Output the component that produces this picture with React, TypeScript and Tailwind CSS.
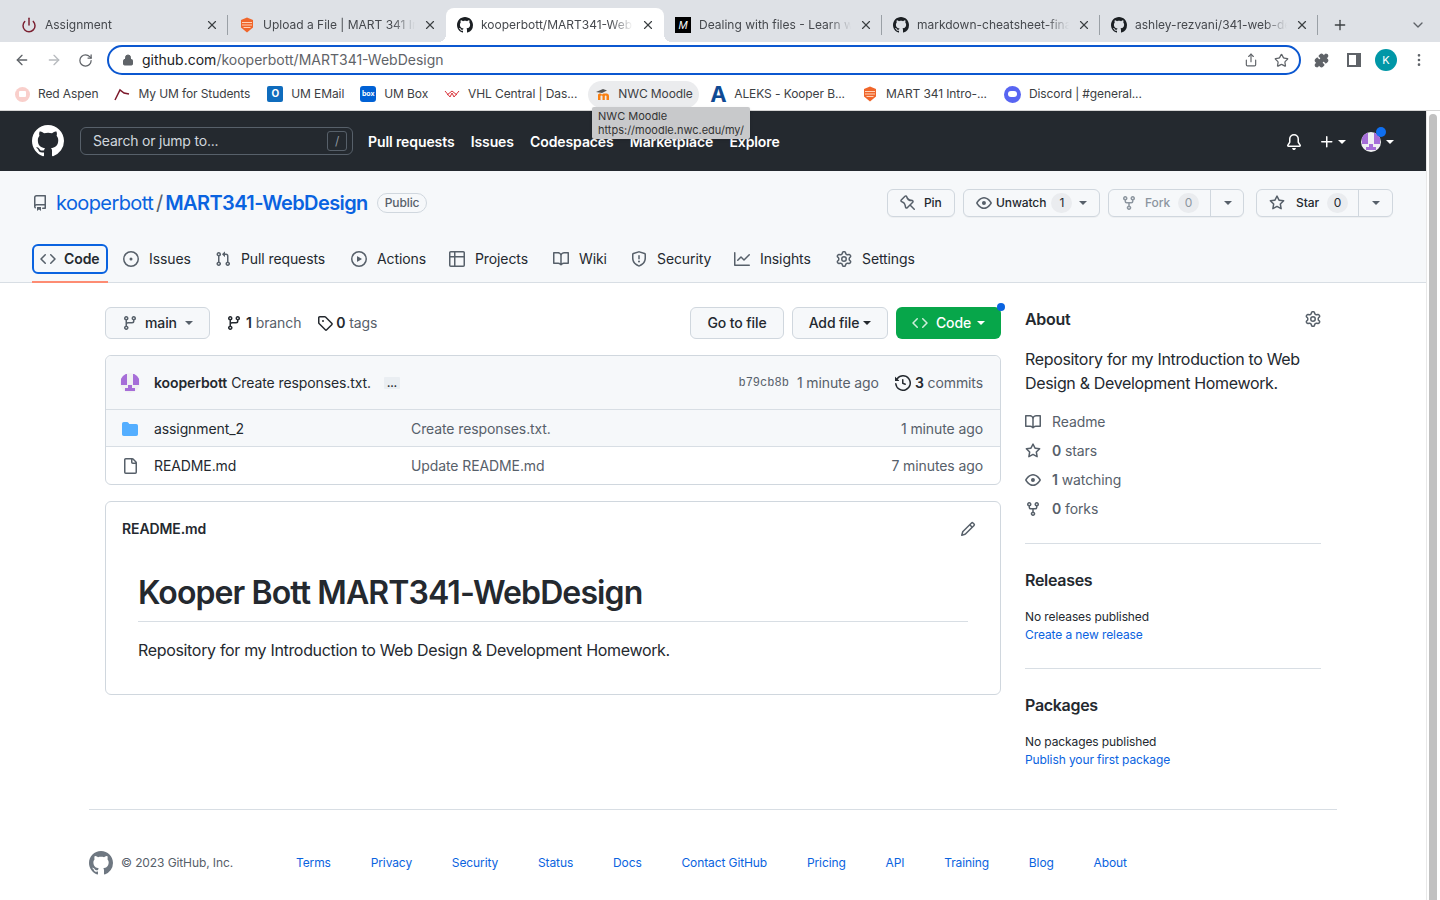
import { ArrowLeft, ArrowRight, Lock, MoreVertical, Plus, Power, Puzzle, RotateCw, Share, ChevronDown, Star, X } from 'lucide-react';

const octicons: Record<string, string> = {
  mark: "M8 0C3.58 0 0 3.58 0 8c0 3.54 2.29 6.53 5.47 7.59.4.07.55-.17.55-.38 0-.19-.01-.82-.01-1.49-2.01.37-2.53-.49-2.69-.94-.09-.23-.48-.94-.82-1.13-.28-.15-.68-.52-.01-.53.63-.01 1.08.58 1.23.82.72 1.21 1.87.87 2.33.66.07-.52.28-.87.51-1.07-1.78-.2-3.64-.89-3.64-3.95 0-.87.31-1.59.82-2.15-.08-.2-.36-1.02.08-2.12 0 0 .67-.21 2.2.82.64-.18 1.32-.27 2-.27.68 0 1.36.09 2 .27 1.53-1.04 2.2-.82 2.2-.82.44 1.1.16 1.92.08 2.12.51.56.82 1.27.82 2.15 0 3.07-1.87 3.75-3.65 3.95.29.25.54.73.54 1.48 0 1.07-.01 1.93-.01 2.2 0 .21.15.46.55.38A8.013 8.013 0 0016 8c0-4.42-3.58-8-8-8z",
  repo: "M2 2.5A2.5 2.5 0 0 1 4.5 0h8.75a.75.75 0 0 1 .75.75v12.5a.75.75 0 0 1-.75.75h-2.5a.75.75 0 0 1 0-1.5h1.75v-2h-8a1 1 0 0 0-.714 1.7.75.75 0 1 1-1.072 1.05A2.495 2.495 0 0 1 2 11.5Zm10.5-1h-8a1 1 0 0 0-1 1v6.708A2.486 2.486 0 0 1 4.5 9h8ZM5 12.25a.25.25 0 0 1 .25-.25h3.5a.25.25 0 0 1 .25.25v3.25a.25.25 0 0 1-.4.2l-1.45-1.087a.249.249 0 0 0-.3 0L5.4 15.7a.25.25 0 0 1-.4-.2Z",
  code: "m11.28 3.22 4.25 4.25a.75.75 0 0 1 0 1.06l-4.25 4.25a.749.749 0 0 1-1.275-.326.749.749 0 0 1 .215-.734L13.94 8l-3.72-3.72a.749.749 0 0 1 .326-1.275.749.749 0 0 1 .734.215Zm-6.56 0a.751.751 0 0 1 1.042.018.751.751 0 0 1 .018 1.042L2.06 8l3.72 3.72a.749.749 0 0 1-.326 1.275.749.749 0 0 1-.734-.215L.47 8.53a.75.75 0 0 1 0-1.06Z",
  issue: "M8 9.5a1.5 1.5 0 1 0 0-3 1.5 1.5 0 0 0 0 3ZM8 0a8 8 0 1 1 0 16A8 8 0 0 1 8 0ZM1.5 8a6.5 6.5 0 1 0 13 0 6.5 6.5 0 0 0-13 0Z",
  pull: "M1.5 3.25a2.25 2.25 0 1 1 3 2.122v5.256a2.251 2.251 0 1 1-1.5 0V5.372A2.25 2.25 0 0 1 1.5 3.25Zm5.677-.177L9.573.677A.25.25 0 0 1 10 .854V2.5h1A2.5 2.5 0 0 1 13.5 5v5.628a2.251 2.251 0 1 1-1.5 0V5a1 1 0 0 0-1-1h-1v1.646a.25.25 0 0 1-.427.177L7.177 3.427a.25.25 0 0 1 0-.354ZM3.75 2.5a.75.75 0 1 0 0 1.5.75.75 0 0 0 0-1.5Zm0 9.5a.75.75 0 1 0 0 1.5.75.75 0 0 0 0-1.5Zm8.25.75a.75.75 0 1 0 1.5 0 .75.75 0 0 0-1.5 0Z",
  play: "M8 0a8 8 0 1 1 0 16A8 8 0 0 1 8 0ZM1.5 8a6.5 6.5 0 1 0 13 0 6.5 6.5 0 0 0-13 0Zm4.879-2.773 4.264 2.559a.25.25 0 0 1 0 .428l-4.264 2.559A.25.25 0 0 1 6 10.559V5.442a.25.25 0 0 1 .379-.215Z",
  table: "M0 1.75C0 .784.784 0 1.75 0h12.5C15.216 0 16 .784 16 1.75v12.5A1.75 1.75 0 0 1 14.25 16H1.75A1.75 1.75 0 0 1 0 14.25ZM6.5 6.5v8h7.75a.25.25 0 0 0 .25-.25V6.5Zm8-1.5V1.75a.25.25 0 0 0-.25-.25H6.5V5Zm-13 1.5v7.75c0 .138.112.25.25.25H5v-8ZM5 5V1.5H1.75a.25.25 0 0 0-.25.25V5Z",
  book: "M0 1.75A.75.75 0 0 1 .75 1h4.253c1.227 0 2.317.59 3 1.501A3.743 3.743 0 0 1 11.006 1h4.245a.75.75 0 0 1 .75.75v10.5a.75.75 0 0 1-.75.75h-4.507a2.25 2.25 0 0 0-1.591.659l-.622.621a.75.75 0 0 1-1.06 0l-.622-.621A2.25 2.25 0 0 0 5.258 13H.75a.75.75 0 0 1-.75-.75Zm7.251 10.324.004-5.073-.002-2.253A2.25 2.25 0 0 0 5.003 2.5H1.5v9h3.757a3.75 3.75 0 0 1 1.994.574ZM8.755 4.75l-.004 7.322a3.752 3.752 0 0 1 1.992-.572H14.5v-9h-3.495a2.25 2.25 0 0 0-2.25 2.25Z",
  shield: "M7.467.133a1.748 1.748 0 0 1 1.066 0l5.25 1.68A1.75 1.75 0 0 1 15 3.48V7c0 1.566-.32 3.182-1.303 4.682-.983 1.498-2.585 2.813-5.032 3.855a1.697 1.697 0 0 1-1.33 0c-2.447-1.042-4.049-2.357-5.032-3.855C1.32 10.182 1 8.566 1 7V3.48a1.75 1.75 0 0 1 1.217-1.667Zm.61 1.429a.25.25 0 0 0-.153 0l-5.25 1.68a.25.25 0 0 0-.174.238V7c0 1.358.275 2.666 1.057 3.86.784 1.194 2.121 2.34 4.366 3.297a.196.196 0 0 0 .154 0c2.245-.956 3.582-2.104 4.366-3.298C13.225 9.666 13.5 8.36 13.5 7V3.48a.251.251 0 0 0-.174-.237l-5.25-1.68ZM8.75 4.75v3a.75.75 0 0 1-1.5 0v-3a.75.75 0 0 1 1.5 0ZM9 10.5a1 1 0 1 1-2 0 1 1 0 0 1 2 0Z",
  graph: "M1.5 1.75V13.5h13.75a.75.75 0 0 1 0 1.5H.75a.75.75 0 0 1-.75-.75V1.75a.75.75 0 0 1 1.5 0Zm14.28 2.53-5.25 5.25a.75.75 0 0 1-1.06 0L7 7.06 4.28 9.78a.751.751 0 0 1-1.042-.018.751.751 0 0 1-.018-1.042l3.25-3.25a.75.75 0 0 1 1.06 0L10 7.94l4.72-4.72a.751.751 0 0 1 1.042.018.751.751 0 0 1 .018 1.042Z",
  gear: "M8 0a8.2 8.2 0 0 1 .701.031C9.444.095 9.99.645 10.16 1.29l.288 1.107c.018.066.079.158.212.224.231.114.454.243.668.386.123.082.233.09.299.071l1.103-.303c.644-.176 1.392.021 1.82.63.27.385.506.792.704 1.218.315.675.111 1.422-.364 1.891l-.814.806c-.049.048-.098.147-.088.294.016.257.016.515 0 .772-.01.147.038.246.088.294l.814.806c.475.469.679 1.216.364 1.891a7.977 7.977 0 0 1-.704 1.217c-.428.61-1.176.807-1.82.63l-1.102-.302c-.067-.019-.177-.011-.3.071a5.909 5.909 0 0 1-.668.386c-.133.066-.194.158-.211.224l-.29 1.106c-.168.646-.715 1.196-1.458 1.26a8.006 8.006 0 0 1-1.402 0c-.743-.064-1.289-.614-1.458-1.26l-.289-1.106c-.018-.066-.079-.158-.212-.224a5.738 5.738 0 0 1-.668-.386c-.123-.082-.233-.09-.299-.071l-1.103.303c-.644.176-1.392-.021-1.82-.63a8.12 8.12 0 0 1-.704-1.218c-.315-.675-.111-1.422.363-1.891l.815-.806c.05-.048.098-.147.088-.294a6.214 6.214 0 0 1 0-.772c.01-.147-.038-.246-.088-.294l-.815-.806C.635 6.045.431 5.298.746 4.623a7.92 7.92 0 0 1 .704-1.217c.428-.61 1.176-.807 1.82-.63l1.102.302c.067.019.177.011.3-.071.214-.143.437-.272.668-.386.133-.066.194-.158.211-.224l.29-1.106C6.009.645 6.556.095 7.299.03 7.53.01 7.764 0 8 0Zm-.571 1.525c-.036.003-.108.036-.137.146l-.289 1.105c-.147.561-.549.967-.998 1.189-.173.086-.34.183-.5.29-.417.278-.97.423-1.529.27l-1.103-.303c-.109-.03-.175.016-.195.045-.22.312-.412.644-.573.99-.014.031-.021.11.059.19l.815.806c.411.406.562.957.53 1.456a4.709 4.709 0 0 0 0 .582c.032.499-.119 1.05-.53 1.456l-.815.806c-.081.08-.073.159-.059.19.162.346.353.677.573.989.02.03.085.076.195.046l1.102-.303c.56-.153 1.113-.008 1.53.27.161.107.328.204.501.29.447.222.85.629.997 1.189l.289 1.105c.029.109.101.143.137.146a6.6 6.6 0 0 0 1.142 0c.036-.003.108-.036.137-.146l.289-1.105c.147-.561.549-.967.998-1.189.173-.086.34-.183.5-.29.417-.278.97-.423 1.529-.27l1.103.303c.109.029.175-.016.195-.045.22-.313.411-.644.573-.99.014-.031.021-.11-.059-.19l-.815-.806c-.411-.406-.562-.957-.53-1.456a4.709 4.709 0 0 0 0-.582c-.032-.499.119-1.05.53-1.456l.815-.806c.081-.08.073-.159.059-.19a6.464 6.464 0 0 0-.573-.989c-.02-.03-.085-.076-.195-.046l-1.102.303c-.56.153-1.113.008-1.53-.27a4.44 4.44 0 0 0-.501-.29c-.447-.222-.85-.629-.997-1.189l-.289-1.105c-.029-.11-.101-.143-.137-.146a6.6 6.6 0 0 0-1.142 0ZM11 8a3 3 0 1 1-6 0 3 3 0 0 1 6 0ZM9.5 8a1.5 1.5 0 1 0-3.001.001A1.5 1.5 0 0 0 9.5 8Z",
  pin: "M4.456.734a1.75 1.75 0 012.826.504l.613 1.327a3.081 3.081 0 002.084 1.707l2.454.584c1.332.317 1.8 1.972.832 2.94L11.06 10l3.72 3.72a.75.75 0 11-1.061 1.06L10 11.06l-2.204 2.205c-.968.968-2.623.5-2.94-.832l-.584-2.454a3.081 3.081 0 00-1.707-2.084l-1.327-.613a1.75 1.75 0 01-.504-2.826L4.456.734zM5.92 1.866a.25.25 0 00-.404-.072L1.794 5.516a.25.25 0 00.072.404l1.328.613A4.582 4.582 0 015.73 9.63l.584 2.454a.25.25 0 00.42.12l5.47-5.47a.25.25 0 00-.12-.42L9.63 6.13a4.583 4.583 0 01-3.098-2.537L5.92 1.866z",
  eye: "M8 2c1.981 0 3.671.992 4.933 2.078 1.27 1.091 2.187 2.345 2.637 3.023a1.62 1.62 0 0 1 0 1.798c-.45.678-1.367 1.932-2.637 3.023C11.67 13.008 9.981 14 8 14c-1.981 0-3.671-.992-4.933-2.078C1.797 10.83.88 9.576.43 8.898a1.62 1.62 0 0 1 0-1.798c.45-.677 1.367-1.931 2.637-3.022C4.33 2.992 6.019 2 8 2ZM1.679 7.932a.12.12 0 0 0 0 .136c.411.622 1.241 1.75 2.366 2.717C5.176 11.758 6.527 12.5 8 12.5c1.473 0 2.825-.742 3.955-1.715 1.124-.967 1.954-2.096 2.366-2.717a.12.12 0 0 0 0-.136c-.412-.621-1.242-1.75-2.366-2.717C10.824 4.242 9.473 3.5 8 3.5c-1.473 0-2.825.742-3.955 1.715-1.124.967-1.954 2.096-2.366 2.717ZM8 10a2 2 0 1 1-.001-3.999A2 2 0 0 1 8 10Z",
  fork: "M5 5.372v.878c0 .414.336.75.75.75h4.5a.75.75 0 0 0 .75-.75v-.878a2.25 2.25 0 1 1 1.5 0v.878a2.25 2.25 0 0 1-2.25 2.25h-1.5v2.128a2.251 2.251 0 1 1-1.5 0V8.5h-1.5A2.25 2.25 0 0 1 3.5 6.25v-.878a2.25 2.25 0 1 1 1.5 0ZM5 3.25a.75.75 0 1 0-1.5 0 .75.75 0 0 0 1.5 0Zm6.75.75a.75.75 0 1 0 0-1.5.75.75 0 0 0 0 1.5Zm-3 8.75a.75.75 0 1 0-1.5 0 .75.75 0 0 0 1.5 0Z",
  star: "M8 .25a.75.75 0 0 1 .673.418l1.882 3.815 4.21.612a.75.75 0 0 1 .416 1.279l-3.046 2.97.719 4.192a.751.751 0 0 1-1.088.791L8 12.347l-3.766 1.98a.75.75 0 0 1-1.088-.79l.72-4.194L.818 6.374a.75.75 0 0 1 .416-1.28l4.21-.611L7.327.668A.75.75 0 0 1 8 .25Zm0 2.445L6.615 5.5a.75.75 0 0 1-.564.41l-3.097.45 2.24 2.184a.75.75 0 0 1 .216.664l-.528 3.084 2.769-1.456a.75.75 0 0 1 .698 0l2.77 1.456-.53-3.084a.75.75 0 0 1 .216-.664l2.24-2.183-3.096-.45a.75.75 0 0 1-.564-.41L8 2.694Z",
  branch: "M9.5 3.25a2.25 2.25 0 1 1 3 2.122V6A2.5 2.5 0 0 1 10 8.5H6a1 1 0 0 0-1 1v1.128a2.251 2.251 0 1 1-1.5 0V5.372a2.25 2.25 0 1 1 1.5 0v1.836A2.493 2.493 0 0 1 6 7h4a1 1 0 0 0 1-1v-.628A2.25 2.25 0 0 1 9.5 3.25Zm-6 0a.75.75 0 1 0 1.5 0 .75.75 0 0 0-1.5 0Zm8.25-.75a.75.75 0 1 0 0 1.5.75.75 0 0 0 0-1.5ZM4.25 12a.75.75 0 1 0 0 1.5.75.75 0 0 0 0-1.5Z",
  tag: "M1 7.775V2.75C1 1.784 1.784 1 2.75 1h5.025c.464 0 .91.184 1.238.513l6.25 6.25a1.75 1.75 0 0 1 0 2.474l-5.026 5.026a1.75 1.75 0 0 1-2.474 0l-6.25-6.25A1.752 1.752 0 0 1 1 7.775Zm1.5 0c0 .066.026.13.073.177l6.25 6.25a.25.25 0 0 0 .354 0l5.025-5.025a.25.25 0 0 0 0-.354l-6.25-6.25a.25.25 0 0 0-.177-.073H2.75a.25.25 0 0 0-.25.25ZM6 5a1 1 0 1 1 0 2 1 1 0 0 1 0-2Z",
  history: "m.427 1.927 1.215 1.215a8.002 8.002 0 1 1-1.6 5.685.75.75 0 1 1 1.493-.154 6.5 6.5 0 1 0 1.18-4.458l1.358 1.358A.25.25 0 0 1 3.896 6H.25A.25.25 0 0 1 0 5.75V2.104a.25.25 0 0 1 .427-.177ZM7.75 4a.75.75 0 0 1 .75.75v2.992l2.028.812a.75.75 0 0 1-.557 1.392l-2.5-1A.751.751 0 0 1 7 8.25v-3.5A.75.75 0 0 1 7.75 4Z",
  folder: "M1.75 1A1.75 1.75 0 0 0 0 2.75v10.5C0 14.216.784 15 1.75 15h12.5A1.75 1.75 0 0 0 16 13.25v-8.5A1.75 1.75 0 0 0 14.25 3H7.5a.25.25 0 0 1-.2-.1l-.9-1.2C6.07 1.26 5.55 1 5 1H1.75Z",
  file: "M2 1.75C2 .784 2.784 0 3.75 0h6.586c.464 0 .909.184 1.237.513l2.914 2.914c.329.328.513.773.513 1.237v9.586A1.75 1.75 0 0 1 13.25 16h-9.5A1.75 1.75 0 0 1 2 14.25Zm1.75-.25a.25.25 0 0 0-.25.25v12.5c0 .138.112.25.25.25h9.5a.25.25 0 0 0 .25-.25V6h-2.75A1.75 1.75 0 0 1 9 4.25V1.5Zm6.75.062V4.25c0 .138.112.25.25.25h2.688l-.011-.013-2.914-2.914-.013-.011Z",
  pencil: "M11.013 1.427a1.75 1.75 0 0 1 2.474 0l1.086 1.086a1.75 1.75 0 0 1 0 2.474l-8.61 8.61c-.21.21-.47.364-.756.445l-3.251.93a.75.75 0 0 1-.927-.928l.929-3.25c.081-.286.235-.547.445-.758l8.61-8.61Zm.176 4.823L9.75 4.81l-6.286 6.287a.253.253 0 0 0-.064.108l-.558 1.953 1.953-.558a.253.253 0 0 0 .108-.064Zm1.238-3.763a.25.25 0 0 0-.354 0L10.811 3.75l1.439 1.44 1.263-1.263a.25.25 0 0 0 0-.354Z",
  bell: "M8 16c.9 0 1.7-.6 1.9-1.5.1-.3-.1-.5-.4-.5h-3c-.3 0-.5.2-.4.5.2.9 1 1.5 1.9 1.5ZM3 5a5 5 0 0 1 10 0v2.947c0 .05.015.098.042.139l1.703 2.555A1.519 1.519 0 0 1 13.482 13H2.518a1.516 1.516 0 0 1-1.263-2.36l1.703-2.554A.255.255 0 0 0 3 7.947Zm5-3.5A3.5 3.5 0 0 0 4.5 5v2.947c0 .346-.102.683-.294.97l-1.703 2.556a.017.017 0 0 0-.003.01l.001.006c0 .002.002.004.004.006l.006.004.007.001h10.964l.007-.001.006-.004.004-.006.001-.007a.017.017 0 0 0-.003-.01l-1.703-2.554a1.745 1.745 0 0 1-.294-.97V5A3.5 3.5 0 0 0 8 1.5Z",
  plus: "M7.75 2a.75.75 0 0 1 .75.75V7h4.25a.75.75 0 0 1 0 1.5H8.5v4.25a.75.75 0 0 1-1.5 0V8.5H2.75a.75.75 0 0 1 0-1.5H7V2.75A.75.75 0 0 1 7.75 2Z",
};

function Octicon({ name, size = 16, className = '' }: { name: string; size?: number; className?: string }) {
  return (
    <svg viewBox="0 0 16 16" width={size} height={size} fill="currentColor" className={`shrink-0 ${className}`}>
      <path fillRule="evenodd" d={octicons[name]} />
    </svg>
  );
}

function Caret({ className = '' }: { className?: string }) {
  return <span className={`inline-block w-0 h-0 border-x-[4px] border-x-transparent border-t-[4px] border-t-current ${className}`} />;
}

function HexIcon() {
  return (
    <svg viewBox="0 0 16 16" width="16" height="16" className="shrink-0">
      <path d="M8 0.5 14 3v7.5L8 15.500 2 10.500V3z" fill="#f0662b" />
      <path d="M3 5.500h10M3 8h10M4.500 10.500h7" stroke="#ffd2b8" strokeWidth="1" />
    </svg>
  );
}

function MoodleIcon() {
  return (
    <svg viewBox="0 0 16 16" width="16" height="16" className="shrink-0">
      <path d="M0 6 7 3l4 1.500L6 7z" fill="#555" />
      <path d="M2 14V9c0-1 1-1.500 2-1.500s1.500.5 2 1c.5-.5 1.500-1 2.500-1h1C11.500 7.500 13 8 13 10v4h-2.500v-4c0-.4-.3-.6-.8-.6s-.9.2-.9.6v4H6.500v-4c0-.4-.3-.6-.7-.6s-1.300.2-1.300.6v4z" fill="#f98012" />
    </svg>
  );
}

function Identicon({ size }: { size: number }) {
  return (
    <svg viewBox="0 0 20 20" width={size} height={size} className="shrink-0 rounded-full bg-[#f0f0f2]">
      <path d="M1 4a3 3 0 0 1 3-3h3v11H1zM13 1h3a3 3 0 0 1 3 3v8h-6zM8 12h4v3h3v3H5v-3h3z" fill="#a66ed8" />
    </svg>
  );
}

function GhFavicon() {
  return <Octicon name="mark" className="text-[#1b1f23]" />;
}

const tabs = [
  { title: 'Assignment', icon: <Power size={16} strokeWidth={2.2} className="text-[#7a1f30] shrink-0" /> },
  { title: 'Upload a File | MART 341 Intro to Web', icon: <HexIcon /> },
  { title: 'kooperbott/MART341-WebDesign', icon: <GhFavicon />, active: true },
  { title: 'Dealing with files - Learn web development', icon: <span className="flex w-4 h-4 shrink-0 items-center justify-center bg-black text-white text-[11px] italic font-['Liberation_Sans',sans-serif]">M</span> },
  { title: 'markdown-cheatsheet-final.md', icon: <GhFavicon /> },
  { title: 'ashley-rezvani/341-web-design', icon: <GhFavicon /> },
];

const bookmarks = [
  { label: 'Red Aspen', gap: 'ml-[15px]', icon: <span className="flex w-[15px] h-[15px] shrink-0 rounded-full bg-[#f9cfcb] items-center justify-center"><span className="w-[7px] h-[6px] rounded-[1px] bg-white" /></span> },
  { label: 'My UM for Students', gap: 'ml-[16px]', icon: <svg viewBox="0 0 16 16" width="16" height="16" className="shrink-0"><path d="M1 14 6 4l4 3 5 1" fill="none" stroke="#7d1a2c" strokeWidth="1.500" /></svg> },
  { label: 'UM EMail', gap: 'ml-[17px]', icon: <span className="flex w-4 h-4 shrink-0 rounded-[2px] bg-[#0f6cbd] items-center justify-center text-white text-[10px] font-bold">O</span> },
  { label: 'UM Box', gap: 'ml-[16px]', icon: <span className="flex w-4 h-4 shrink-0 rounded-[3px] bg-[#0061d5] items-center justify-center text-white text-[7px] font-bold">box</span> },
  { label: 'VHL Central | Das...', gap: 'ml-[16px]', icon: <svg viewBox="0 0 16 16" width="16" height="16" className="shrink-0"><path d="M1 5l5 6 2-4 2 4 5-6M3 9l5-4 5 4" fill="none" stroke="#d9323a" strokeWidth="1" /></svg> },
];

const bookmarksRight = [
  { label: 'ALEKS - Kooper B...', gap: 'ml-[11px]', icon: <span className="w-4 shrink-0 text-[#0f4a94] text-[22px] leading-none font-bold text-center">A</span> },
  { label: 'MART 341 Intro-...', gap: 'ml-[17px]', icon: <HexIcon /> },
  { label: 'Discord | #general...', gap: 'ml-[17px]', icon: <span className="flex w-[17px] h-[17px] shrink-0 rounded-full bg-[#5865f2] items-center justify-center"><span className="w-[9px] h-[6px] rounded-[3px] bg-white" /></span> },
];

const repoTabs = [
  { label: 'Issues', icon: 'issue', w: 'w-[92px]' },
  { label: 'Pull requests', icon: 'pull', w: 'w-[136px]' },
  { label: 'Actions', icon: 'play', w: 'w-[98px]' },
  { label: 'Projects', icon: 'table', w: 'w-[104px]' },
  { label: 'Wiki', icon: 'book', w: 'w-[78px]' },
  { label: 'Security', icon: 'shield', w: 'w-[103px]' },
  { label: 'Insights', icon: 'graph', w: 'w-[102px]' },
  { label: 'Settings', icon: 'gear', w: 'w-[100px]' },
];

const footerLinks = ['Terms', 'Privacy', 'Security', 'Status', 'Docs', 'Contact GitHub', 'Pricing', 'API', 'Training', 'Blog', 'About'];

function Counter({ n, muted }: { n: number; muted?: boolean }) {
  return <span className={`flex items-center justify-center w-[21px] h-5 rounded-full bg-[#eaecef] text-xs font-normal ${muted ? 'text-[#8c959f]' : 'text-[#24292f]'}`}>{n}</span>;
}

function BrowserChrome() {
  return (
    <div className="bg-white tracking-normal">
      {/* tab strip */}
      <div className="h-[42px] bg-[#dee1e6] flex items-end pl-[10px]">
        {tabs.map((t, i) => {
          const noSep = t.active || tabs[i + 1]?.active;
          return (
            <div key={t.title} className={`relative w-[218px] h-[34px] flex items-center pl-[11px] pr-[9px] gap-2 text-xs ${t.active ? 'bg-white rounded-t-lg' : ''}`}>
              {t.active && <span className="absolute -left-2 bottom-0 w-2 h-2 bg-[radial-gradient(circle_at_0_0,transparent_8px,white_8px)]" />}
              {t.active && <span className="absolute -right-2 bottom-0 w-2 h-2 bg-[radial-gradient(circle_at_100%_0,transparent_8px,white_8px)]" />}
              {t.icon}
              <span className="flex-1 overflow-hidden whitespace-nowrap text-[#45484d] [mask-image:linear-gradient(to_right,black_85%,transparent)]">{t.title}</span>
              <X size={14} strokeWidth={2} className="text-[#3c4043] shrink-0" />
              {!noSep && <span className="absolute right-0 top-[7px] w-px h-5 bg-[#9aa0a6]" />}
            </div>
          );
        })}
        <div className="h-[34px] flex items-center ml-[14px]">
          <Plus size={16} strokeWidth={2} className="text-[#3c4043]" />
        </div>
        <div className="h-[34px] flex items-center ml-[62px]">
          <ChevronDown size={16} className="text-[#5f6368]" />
        </div>
      </div>

      {/* toolbar */}
      <div className="h-[36px] flex items-center pl-[14px]">
        <ArrowLeft size={16} strokeWidth={2} className="text-[#5f6368]" />
        <ArrowRight size={16} strokeWidth={2} className="text-[#b8bbbf] ml-4" />
        <RotateCw size={15} strokeWidth={2} className="text-[#5f6368] ml-4" />
        <div className="ml-[14px] w-[1194px] h-[30px] rounded-full border-2 border-[#0b57d0] flex items-center pl-[13px] pr-[10px]">
          <Lock size={12} fill="#5f6368" className="text-[#5f6368]" />
          <span className="ml-[8px] text-sm text-[#202124]">github.com<span className="text-[#5f6368]">/kooperbott/MART341-WebDesign</span></span>
          <Share size={14} className="ml-auto text-[#5f6368]" />
          <Star size={15} className="ml-[16px] text-[#5f6368]" />
        </div>
        <Puzzle size={15} fill="#5f6368" className="ml-[13px] text-[#5f6368]" />
        <span className="ml-[18px] w-[14px] h-[14px] border-2 border-[#5f6368] border-r-[5px]" />
        <span className="ml-[14px] flex w-[22px] h-[22px] rounded-full bg-[#0097a7] items-center justify-center text-white text-[11px]">K</span>
        <MoreVertical size={16} className="ml-[14px] text-[#5f6368]" />
      </div>

      {/* bookmarks */}
      <div className="h-[32px] flex items-center text-xs tracking-[-0.1px] text-[#3c4043]">
        {bookmarks.map(b => (
          <div key={b.label} className={`flex items-center gap-2 ${b.gap}`}>
            {b.icon}
            <span className="whitespace-nowrap">{b.label}</span>
          </div>
        ))}
        <div className="ml-[11px] w-[111px] h-[27px] flex items-center gap-1.5 rounded-full bg-[#ebecee] pl-2">
          <MoodleIcon />
          <span className="whitespace-nowrap">NWC Moodle</span>
        </div>
        {bookmarksRight.map(b => (
          <div key={b.label} className={`flex items-center gap-2 ${b.gap}`}>
            {b.icon}
            <span className="whitespace-nowrap">{b.label}</span>
          </div>
        ))}
      </div>
    </div>
  );
}

function GlobalHeader() {
  return (
    <header className="h-[60px] bg-[#24292f] flex items-center pl-8 pr-[32px] text-white">
      <Octicon name="mark" size={32} />
      <div className="ml-4 w-[273px] h-[28px] rounded-md border border-[#57606a] flex items-center pl-3 pr-[5px] text-sm tracking-[-0.2px] text-[#d0d7de]">
        <span>Search or jump to...</span>
        <span className="ml-auto flex w-5 h-5 items-center justify-center rounded-[3px] border border-[#57606a] text-xs text-[#8c959f]">/</span>
      </div>
      <nav className="ml-[15px] mt-[2px] flex gap-[16.2px] text-sm font-semibold whitespace-nowrap">
        <span>Pull requests</span>
        <span>Issues</span>
        <span>Codespaces</span>
        <span>Marketplace</span>
        <span>Explore</span>
      </nav>
      <div className="ml-auto mt-px flex items-center">
        <Octicon name="bell" />
        <Octicon name="plus" className="ml-[17px]" />
        <Caret className="ml-[3px]" />
        <span className="relative ml-[15px] w-5 h-5">
          <Identicon size={20} />
          <span className="absolute left-[15px] -top-[5px] w-[10px] h-[10px] rounded-full bg-[#0f6ff0]" />
        </span>
        <Caret className="ml-[5px]" />
      </div>
    </header>
  );
}

function RepoHead() {
  const btn = 'h-[28px] flex items-center rounded-md border border-[#d0d7de] bg-[#f6f8fa] text-xs font-medium shadow-[0_1px_0_rgba(27,31,36,0.04)]';
  return (
    <div className="bg-[#f6f8fa] border-b border-[#d8dee4] pt-[18px] h-[112px]">
      <div className="flex items-center pl-8 pr-[33px] h-[28px]">
        <Octicon name="repo" className="text-[#57606a]" />
        <span className="ml-2 text-xl tracking-[-0.6px] text-[#0a63e0]">kooperbott</span>
        <span className="ml-[3px] mr-[2px] text-xl text-[#57606a]">/</span>
        <span className="text-xl tracking-[-0.6px] font-semibold text-[#0a63e0]">MART341-WebDesign</span>
        <span className="ml-[9px] -mt-px h-5 flex items-center rounded-full border border-[#d0d7de] px-[7px] text-xs font-medium text-[#57606a]">Public</span>

        <div className="ml-auto flex gap-2 text-[#24292f]">
          <div className={`${btn} w-[68px] pl-3 gap-[8px]`}>
            <Octicon name="pin" className="text-[#57606a]" /> Pin
          </div>
          <div className={`${btn} w-[137px] pl-3 gap-1`}>
            <Octicon name="eye" className="text-[#57606a]" /> Unwatch
            <span className="ml-[1px]"><Counter n={1} /></span>
            <Caret className="ml-[3px] text-[#57606a]" />
          </div>
          <div className={`${btn} w-[136px] text-[#8c959f]`}>
            <div className="flex items-center gap-2 pl-3 w-[102px] h-full border-r border-[#d0d7de]">
              <Octicon name="fork" /> Fork <Counter n={0} muted />
            </div>
            <Caret className="ml-[13px] text-[#57606a]" />
          </div>
          <div className={`${btn} ml-1 w-[137px]`}>
            <div className="flex items-center gap-2 pl-3 w-[102px] h-full border-r border-[#d0d7de]">
              <Octicon name="star" className="text-[#57606a]" /><span className="ml-[3px]">Star</span> <Counter n={0} />
            </div>
            <Caret className="ml-[13px] text-[#57606a]" />
          </div>
        </div>
      </div>

      <nav className="flex items-start pl-8 mt-[27px] text-sm text-[#24292f]">
        <div className="relative w-[76px] h-[30px] mr-[7px] flex items-center gap-2 pl-2 rounded-md border-2 border-[#0a63e0] font-semibold">
          <Octicon name="code" className="text-[#57606a] -ml-[2px]" /> Code
          <span className="absolute -left-[2px] -right-[2px] top-[35px] h-[2px] bg-[#fd8c73]" />
        </div>
        {repoTabs.map(t => (
          <div key={t.label} className={`h-[30px] flex items-center gap-[10px] pl-2 ${t.w}`}>
            <Octicon name={t.icon} className="text-[#57606a]" />
            {t.label}
          </div>
        ))}
      </nav>
    </div>
  );
}

function FileBrowser() {
  const btn = 'h-8 flex items-center rounded-md border border-[#d0d7de] bg-[#f6f8fa] text-sm font-medium text-[#24292f]';
  return (
    <div className="w-[896px]">
      <div className="flex items-center h-8">
        <div className={`${btn} w-[105px] pl-4`}>
          <Octicon name="branch" className="text-[#57606a]" />
          <span className="ml-[7px]">main</span>
          <Caret className="ml-2 text-[#57606a]" />
        </div>
        <Octicon name="branch" className="ml-4 text-[#24292f]" />
        <span className="ml-[4px] text-sm text-[#57606a]"><b className="font-semibold text-[#24292f]">1</b> branch</span>
        <Octicon name="tag" className="ml-4 text-[#24292f]" />
        <span className="ml-[3px] text-sm text-[#57606a]"><b className="font-semibold text-[#24292f]">0</b> tags</span>

        <div className={`${btn} ml-auto w-[94px] justify-center`}>Go to file</div>
        <div className={`${btn} ml-2 w-[96px] justify-center gap-1`}>Add file <Caret /></div>
        <div className="relative ml-2 w-[105px] h-8 flex items-center justify-center gap-2 rounded-md bg-[#07a64a] text-sm font-medium text-white">
          <Octicon name="code" className="opacity-80" /> Code <Caret className="-ml-[2px]" />
          <span className="absolute -right-[4px] -top-[4px] w-2 h-2 rounded-full bg-[#0a63e0]" />
        </div>
      </div>

      <div className="mt-4 rounded-md border border-[#d0d7de] text-sm">
        <div className="h-[54px] bg-[#f6f8fa] rounded-t-md flex items-center pl-[14px] pr-[17px] border-b border-[#d8dee4]">
          <Identicon size={20} />
          <span className="ml-[14px] font-semibold text-[#24292f]">kooperbott</span>
          <span className="ml-1 text-[#24292f]">Create responses.txt.</span>
          <span className="ml-[13px] flex items-center justify-center w-[16px] h-[12px] rounded-[1px] bg-[#eaeef2] text-[10px] font-bold leading-none text-[#24292f]">…</span>
          <span className="ml-auto font-['Liberation_Mono',monospace] text-xs tracking-normal text-[#57606a]">b79cb8b</span>
          <span className="ml-2 text-[#57606a]">1 minute ago</span>
          <Octicon name="history" className="ml-4 text-[#24292f]" />
          <span className="ml-1 text-[#57606a]"><b className="font-semibold text-[#24292f]">3</b> commits</span>
        </div>
        <div className="h-[37px] pt-px bg-[#f6f8fa] flex items-center pl-4 pr-[17px] border-b border-[#d8dee4]">
          <Octicon name="folder" className="text-[#54aeff]" />
          <span className="ml-4 w-[257px] text-[#24292f]">assignment_2</span>
          <span className="text-[#57606a]">Create responses.txt.</span>
          <span className="ml-auto text-[#57606a]">1 minute ago</span>
        </div>
        <div className="h-[37px] flex items-center pl-4 pr-[17px]">
          <Octicon name="file" className="text-[#57606a]" />
          <span className="ml-4 w-[257px] text-[#24292f]">README.md</span>
          <span className="text-[#57606a]">Update README.md</span>
          <span className="ml-auto text-[#57606a]">7 minutes ago</span>
        </div>
      </div>

      <div className="mt-4 h-[194px] rounded-md border border-[#d0d7de]">
        <div className="h-[54px] flex items-center justify-between pl-4 pr-6 text-sm font-semibold text-[#24292f]">
          README.md
          <Octicon name="pencil" className="text-[#57606a]" />
        </div>
        <div className="px-8">
          <h1 className="mt-[17px] h-[49px] border-b border-[#d8dee4] text-[32px] leading-[40px] tracking-[-0.9px] font-semibold text-[#24292f]">Kooper Bott MART341-WebDesign</h1>
          <p className="mt-4 text-base leading-6 tracking-[-0.33px] text-[#24292f]">Repository for my Introduction to Web Design &amp; Development Homework.</p>
        </div>
      </div>
    </div>
  );
}

function Sidebar() {
  const rows = [
    { icon: 'book', label: <>Readme</> },
    { icon: 'star', label: <><b className="font-semibold">0</b> stars</> },
    { icon: 'eye', label: <><b className="font-semibold">1</b> watching</> },
    { icon: 'fork', label: <><b className="font-semibold">0</b> forks</> },
  ];
  return (
    <aside className="w-[296px] text-[#24292f]">
      <div className="flex items-center justify-between h-6">
        <h2 className="text-base font-semibold tracking-[-0.3px]">About</h2>
        <Octicon name="gear" className="text-[#57606a]" />
      </div>
      <p className="mt-[16px] text-base leading-6 tracking-[-0.33px]">Repository for my Introduction to Web Design &amp; Development Homework.</p>
      <div className="mt-[16px] flex flex-col gap-[8px] text-sm text-[#57606a]">
        {rows.map(r => (
          <div key={r.icon} className="h-[21px] flex items-center gap-[11px]">
            <Octicon name={r.icon} />
            <span>{r.label}</span>
          </div>
        ))}
      </div>
      <div className="mt-[24px] border-t border-[#d8dee4] pt-[24px]">
        <h2 className="text-base font-semibold leading-6 tracking-[-0.3px]">Releases</h2>
        <p className="mt-[16px] text-xs leading-[18px]">No releases published</p>
        <p className="text-xs leading-[18px] text-[#0a63e0]">Create a new release</p>
      </div>
      <div className="mt-[24px] border-t border-[#d8dee4] pt-[24px]">
        <h2 className="text-base font-semibold leading-6 tracking-[-0.3px]">Packages</h2>
        <p className="mt-[16px] text-xs leading-[18px]">No packages published</p>
        <p className="text-xs leading-[18px] text-[#0a63e0]">Publish your first package</p>
      </div>
    </aside>
  );
}

export default function App() {
  return (
    <div className="relative w-[1440px] h-[900px] overflow-hidden bg-white tracking-[-0.1px] font-['Inter',sans-serif]">
      <BrowserChrome />
      <div className="flex border-t border-[#d5d5d5]">
        <div className="w-[1426px] shrink-0">
          <GlobalHeader />
          <RepoHead />
          <main className="w-[1216px] mx-auto pt-6 flex gap-6">
            <FileBrowser />
            <Sidebar />
          </main>
          <footer className="mx-[89px] mt-[40px] border-t border-[#d8dee4] pt-[41px] flex items-center text-xs">
            <Octicon name="mark" size={24} className="text-[#6e7781]" />
            <span className="ml-2 w-[175px] text-[#57606a]">© 2023 GitHub, Inc.</span>
            <div className="flex gap-[39.8px] text-[#0a63e0]">
              {footerLinks.map(l => <span key={l}>{l}</span>)}
            </div>
          </footer>
        </div>
        <div className="flex-1 h-[790px] bg-white border-l border-[#e8e8e8] pl-[2px] pt-[3px]">
          <div className="w-[8px] h-full rounded-t-full bg-[#c1c1c1]" />
        </div>
      </div>

      {/* bookmark tooltip */}
      <div className="absolute left-[592px] top-[107px] w-[158px] h-[32px] rounded-[2px] bg-[#c8c9cb] shadow-sm px-[6px] pt-[2px] text-[11px] leading-[14px] tracking-normal text-[#333]">
        <div>NWC Moodle</div>
        <div>https://moodle.nwc.edu/my/</div>
      </div>
    </div>
  );
}
